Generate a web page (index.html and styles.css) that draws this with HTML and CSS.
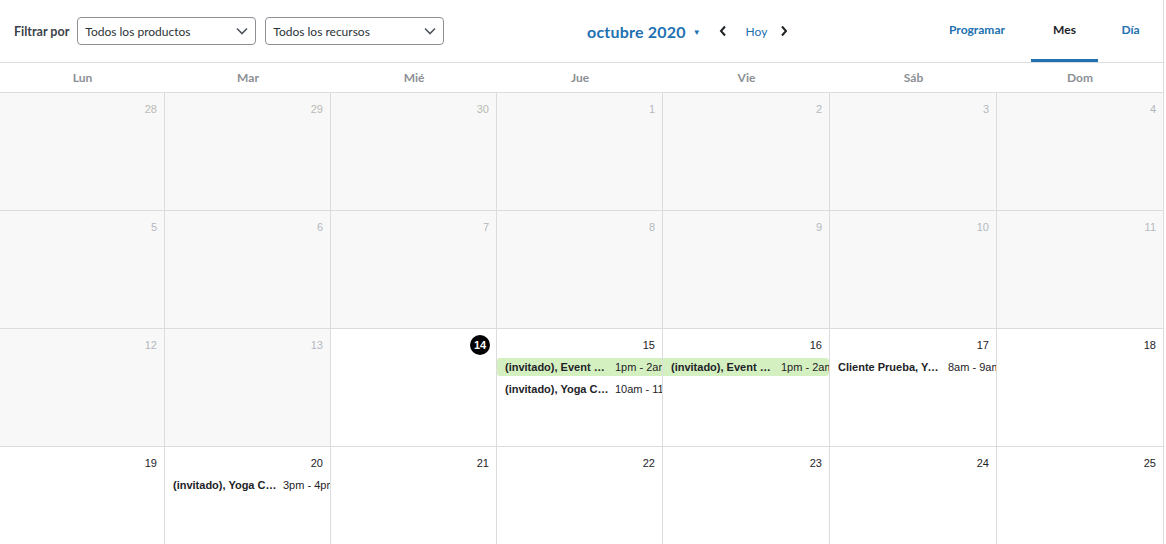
FILE: index.html
```html
<!DOCTYPE html>
<html lang="es">
<head>
    <meta charset="UTF-8">
    <meta name="viewport" content="width=device-width, initial-scale=1.0">
    <title>Calendario de reservas</title>
    <link rel="stylesheet" href="styles.css">
</head>
<body>
    <div class="calendar">
        <div class="toolbar">
            <div class="filters">
                <span class="filter-label">Filtrar por</span>
                <div class="select">
                    <span>Todos los productos</span>
                    <svg width="12" height="8" viewBox="0 0 12 8"><path d="M1 1.5l5 5 5-5" fill="none" stroke="#50575e" stroke-width="1.6"/></svg>
                </div>
                <div class="select">
                    <span>Todos los recursos</span>
                    <svg width="12" height="8" viewBox="0 0 12 8"><path d="M1 1.5l5 5 5-5" fill="none" stroke="#50575e" stroke-width="1.6"/></svg>
                </div>
            </div>
            <div class="month-nav">
                <span class="month-title">octubre 2020</span>
                <span class="caret">&#9660;</span>
                <svg class="arrow" width="8" height="12" viewBox="0 0 8 12"><path d="M6 1.5L2 6l4 4.5" fill="none" stroke="#1d2327" stroke-width="2"/></svg>
                <span class="today-link">Hoy</span>
                <svg class="arrow" width="8" height="12" viewBox="0 0 8 12"><path d="M2 1.5L6 6l-4 4.5" fill="none" stroke="#1d2327" stroke-width="2"/></svg>
            </div>
            <nav class="views">
                <a class="view">Programar</a>
                <a class="view active">Mes</a>
                <a class="view">Día</a>
            </nav>
        </div>

        <div class="weekdays">
            <div>Lun</div><div>Mar</div><div>Mié</div><div>Jue</div><div>Vie</div><div>Sáb</div><div>Dom</div>
        </div>

        <div class="grid">
            <div class="day past muted"><span class="num">28</span></div>
            <div class="day past muted"><span class="num">29</span></div>
            <div class="day past muted"><span class="num">30</span></div>
            <div class="day past"><span class="num">1</span></div>
            <div class="day past"><span class="num">2</span></div>
            <div class="day past"><span class="num">3</span></div>
            <div class="day past"><span class="num">4</span></div>

            <div class="day past"><span class="num">5</span></div>
            <div class="day past"><span class="num">6</span></div>
            <div class="day past"><span class="num">7</span></div>
            <div class="day past"><span class="num">8</span></div>
            <div class="day past"><span class="num">9</span></div>
            <div class="day past"><span class="num">10</span></div>
            <div class="day past"><span class="num">11</span></div>

            <div class="day past"><span class="num">12</span></div>
            <div class="day past"><span class="num">13</span></div>
            <div class="day today"><span class="num">14</span></div>
            <div class="day">
                <span class="num">15</span>
                <div class="event booked first"><span class="ev-title">(invitado), Event Booking</span><span class="ev-time">1pm - 2am</span></div>
                <div class="event"><span class="ev-title">(invitado), Yoga Class</span><span class="ev-time">10am - 11am</span></div>
            </div>
            <div class="day">
                <span class="num">16</span>
                <div class="event booked last"><span class="ev-title">(invitado), Event Booking</span><span class="ev-time">1pm - 2am</span></div>
            </div>
            <div class="day">
                <span class="num">17</span>
                <div class="event"><span class="ev-title">Cliente Prueba, Yoga Class</span><span class="ev-time">8am - 9am</span></div>
            </div>
            <div class="day"><span class="num">18</span></div>

            <div class="day"><span class="num">19</span></div>
            <div class="day">
                <span class="num">20</span>
                <div class="event"><span class="ev-title">(invitado), Yoga Class</span><span class="ev-time">3pm - 4pm</span></div>
            </div>
            <div class="day"><span class="num">21</span></div>
            <div class="day"><span class="num">22</span></div>
            <div class="day"><span class="num">23</span></div>
            <div class="day"><span class="num">24</span></div>
            <div class="day"><span class="num">25</span></div>
        </div>
    </div>
</body>
</html>
```

FILE: styles.css
```css
body {
    margin: 0;
    background: #fff;
    font-family: Lato, "Open Sans", sans-serif;
    color: #1d2327;
    overflow: hidden;
}
.calendar {
    width: 1163px;
    border-right: 1px solid #dcdcde;
}
.toolbar {
    height: 62px;
    display: flex;
    align-items: center;
    border-bottom: 1px solid #dcdcde;
    padding-left: 14px;
}
.filters {
    display: flex;
    align-items: center;
    gap: 9px;
    width: 573px;
}
.filter-label {
    font-size: 12.5px;
    font-weight: 700;
    color: #3c434a;
    white-space: nowrap;
    margin-right: -1px;
}
.select {
    width: 163px;
    height: 26px;
    border: 1px solid #8c8f94;
    border-radius: 4px;
    display: flex;
    align-items: center;
    justify-content: space-between;
    padding: 0 7px;
    font-size: 12px;
    color: #2c3338;
}
.month-nav {
    display: flex;
    align-items: center;
    width: 340px;
}
.month-title {
    font-size: 16px;
    font-weight: 700;
    color: #2271b1;
    letter-spacing: 0.2px;
}
.caret {
    font-size: 8px;
    color: #2271b1;
    margin: 1px 18px 0 7px;
}
.today-link {
    font-size: 12px;
    color: #2271b1;
    margin: 0 13px 0 19px;
}
.views {
    display: flex;
    height: 62px;
}
.view {
    display: flex;
    align-items: center;
    justify-content: center;
    font-size: 12px;
    font-weight: 700;
    color: #2271b1;
    border-bottom: 3px solid transparent;
    box-sizing: border-box;
    height: 62px;
}
.view:nth-child(1) { width: 104px; padding-right: 4px; }
.view:nth-child(2) { width: 67px; }
.view:nth-child(3) { width: 65px; }
.view.active {
    color: #1d2327;
    border-bottom-color: #2271b1;
}
.weekdays {
    display: grid;
    grid-template-columns: 165px 166px 166px 166px 167px 167px 166px;
    height: 29px;
    border-bottom: 1px solid #dcdcde;
}
.weekdays div {
    display: flex;
    align-items: center;
    justify-content: center;
    font-size: 12px;
    font-weight: 700;
    color: #8c8f94;
}
.grid {
    display: grid;
    grid-template-columns: 165px 166px 166px 166px 167px 167px 166px;
    grid-auto-rows: 118px;
}
.day {
    box-sizing: border-box;
    border-right: 1px solid #dcdcde;
    border-bottom: 1px solid #dcdcde;
    overflow: hidden;
    display: flex;
    flex-direction: column;
    font-family: "Liberation Sans", Arial, sans-serif;
    background: #fff;
}
.day:nth-child(7n) { border-right: none; }
.day.past { background: #f8f8f8; }
.num {
    align-self: flex-end;
    font-size: 11px;
    line-height: 20px;
    margin: 6px 7px 2px 0;
    color: #1d2327;
}
.day.past .num { color: #b4b9be; }
.day.muted .num { color: #b8bbb4; }
.day.today .num {
    width: 20px;
    height: 20px;
    border-radius: 50%;
    background: #000;
    color: #fff;
    font-weight: 700;
    text-align: center;
    margin-right: 6px;
}
.event {
    display: flex;
    align-items: center;
    height: 18px;
    margin: 1px 0 3px;
    padding-left: 8px;
    font-size: 11px;
    color: #1d2327;
    white-space: nowrap;
}
.event.booked { background: #d5f0c0; }
.event.first { border-radius: 3px 0 0 3px; }
.event.last { border-radius: 0 3px 3px 0; }
.ev-title {
    width: 106px;
    overflow: hidden;
    text-overflow: ellipsis;
    font-weight: 700;
    flex-shrink: 0;
    margin-right: 4px;
}
.ev-time {
    flex-shrink: 0;
}
```
